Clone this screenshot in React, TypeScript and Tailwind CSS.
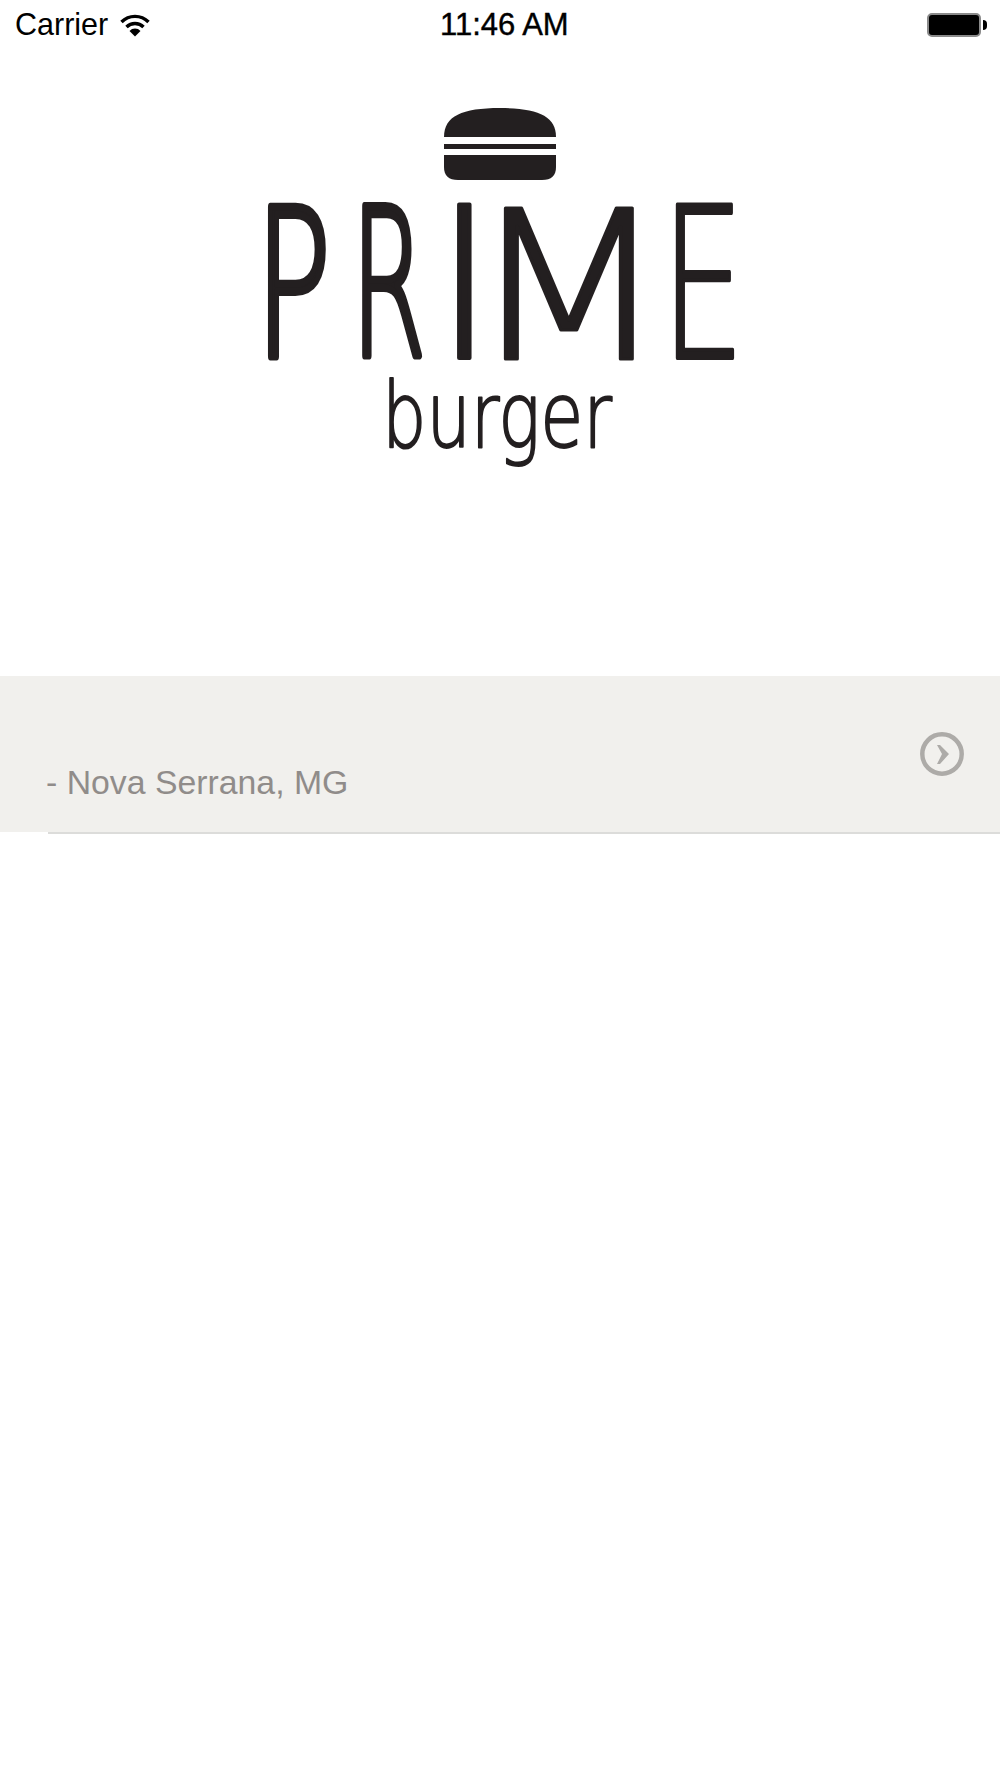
const letters = [
  { ch: 'P', x: 255, sx: 0.61, sy: 0.987, sw: 8 },
  { ch: 'R', x: 351, sx: 0.52, sy: 0.987, sw: 8 },
  { ch: 'I', x: 434, sx: 1, sy: 1.013, sw: 4 },
  { ch: 'M', x: 468, sx: 1.13, sy: 1.0, sw: 3 },
  { ch: 'E', x: 661, sx: 0.64, sy: 1.013, sw: 4 },
];

function Logo() {
  return (
    <svg viewBox="250 100 500 380" className="h-[380px] w-[500px]" aria-label="Prime burger">
      {/* bun */}
      <path
        d="M444 137 C444 116 462 108 500 108 C538 108 556 116 556 137 Z"
        fill="#231f20"
      />
      <rect x="444" y="144" width="112" height="5" fill="#231f20" />
      <path
        d="M444 155 H556 V167 Q556 180 542 180 H458 Q444 180 444 167 Z"
        fill="#231f20"
      />
      <g
        fontFamily="'DejaVu Sans', sans-serif"
        fontWeight="200"
        fill="#231f20"
        stroke="#231f20"
        strokeLinejoin="round"
      >
        {letters.map((l) => (
          <text
            key={l.ch}
            transform={`translate(${l.x} ${360 - l.sw / 2}) scale(${l.sx} ${l.sy})`}
            fontSize="207"
            strokeWidth={l.sw}
          >
            {l.ch}
          </text>
        ))}
        <text
          x="382"
          y="447"
          fontSize="90"
          textLength="230"
          lengthAdjust="spacingAndGlyphs"
          strokeWidth="2"
        >
          burger
        </text>
      </g>
    </svg>
  );
}

function Wifi() {
  return (
    <svg viewBox="0 0 30 24" className="ml-[12px] h-[24px] w-[30px]" fill="none" stroke="#000">
      <path d="M1.5 9 A19 19 0 0 1 28.5 9" strokeWidth="3.4" />
      <path d="M6.5 14 A12 12 0 0 1 23.5 14" strokeWidth="3.4" />
      <path d="M15 23.5 L9.5 18 A7.5 7.5 0 0 1 20.5 18 Z" fill="#000" stroke="none" />
    </svg>
  );
}

function Battery() {
  return (
    <div className="flex items-center">
      <div className="h-[24px] w-[54px] rounded-[5px] border-2 border-[#8a8a8a] bg-black" />
      <div className="ml-[2px] h-[10px] w-[4px] rounded-r-full bg-black" />
    </div>
  );
}

export default function App() {
  return (
    <main className="min-h-[1778px] bg-white font-['Liberation_Sans',sans-serif]">
      <header className="relative flex h-[50px] items-center justify-between pl-[15px] pr-[13px] text-black">
        <div className="flex items-center text-[30.5px]">
          <span>Carrier</span>
          <Wifi />
        </div>
        <span className="absolute left-[440px] text-[31px] [-webkit-text-stroke:0.4px_#000]">11:46 AM</span>
        <Battery />
      </header>

      <div className="flex h-[626px] justify-center pt-[50px]">
        <Logo />
      </div>

      <div className="relative flex h-[156px] items-center justify-between bg-[#f1f0ed] pl-[46px] pr-[36px]">
        <span className="mt-[56px] text-[33.8px] text-[#908c8a]">- Nova Serrana, MG</span>
        <svg viewBox="0 0 44 44" className="h-[44px] w-[44px]" fill="none">
          <circle cx="22" cy="22" r="19.7" stroke="#adaba8" strokeWidth="4.5" />
          <path d="M17 13 L20 13 L29 22 L20 32 L17 32 L22 22 Z" fill="#adaba8" />
        </svg>
        <div className="absolute -bottom-[2px] left-[48px] right-0 h-[2px] bg-[#dcdcda]" />
      </div>
    </main>
  );
}
